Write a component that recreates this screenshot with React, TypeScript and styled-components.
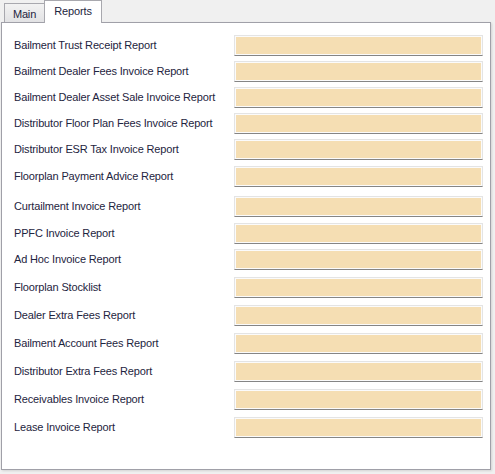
import React from 'react';
import styled, { createGlobalStyle } from 'styled-components';

const GlobalStyle = createGlobalStyle`
  html, body {
    margin: 0;
    padding: 0;
    background: #f0f0f0;
  }
  body {
    font-family: "Liberation Sans", Arial, sans-serif;
    font-size: 11px;
    letter-spacing: -0.15px;
    color: #1e2440;
  }
`;

const Window = styled.div`
  width: 495px;
  height: 474px;
  padding-left: 1px;
  box-sizing: border-box;
`;

const TabStrip = styled.div`
  display: flex;
  align-items: flex-end;
  height: 22px;
  padding-left: 3px;
`;

const Tab = styled.div<{ $active?: boolean }>`
  box-sizing: border-box;
  display: flex;
  align-items: center;
  justify-content: center;
  border: 1px solid #a8a8ae;
  border-bottom: none;
  font-size: 11px;
  color: #1e2440;
  ${(p) =>
    p.$active
      ? `
    height: 23px;
    width: 58px;
    margin-left: -1px;
    margin-bottom: -1px;
    background: #ffffff;
    position: relative;
    z-index: 1;
    padding-bottom: 2px;
  `
      : `
    height: 19px;
    width: 41px;
    background: linear-gradient(#f2f2f2, #e2e2e4);
    padding-top: 1px;
  `}
`;

const Panel = styled.div`
  box-sizing: border-box;
  width: 490px;
  height: 448px;
  background: #ffffff;
  border: 1px solid #a0a0a8;
  box-shadow: 1px 1px 2px rgba(0, 0, 0, 0.12);
  padding: 12px 7px 0 12px;
  display: grid;
  grid-template-columns: 1fr 249px;
  align-content: start;
`;

const Label = styled.div<{ $gap: number }>`
  margin-top: ${(p) => p.$gap}px;
  height: 21px;
  padding-bottom: 1px;
  box-sizing: border-box;
  display: flex;
  align-items: center;
  white-space: nowrap;
`;

const Field = styled.div<{ $gap: number }>`
  margin-top: ${(p) => p.$gap}px;
  box-sizing: border-box;
  height: 21px;
  border: 1px solid #e4e4e4;
  border-bottom: 1px solid #858585;
  box-shadow: inset 0 0 0 1px #fbfbfb;
  background: #f5deb3;
`;

const reports: [string, number][] = [
  ['Bailment Trust Receipt Report', 0],
  ['Bailment Dealer Fees Invoice Report', 5],
  ['Bailment Dealer Asset Sale Invoice Report', 5],
  ['Distributor Floor Plan Fees Invoice Report', 5],
  ['Distributor ESR Tax Invoice Report', 5],
  ['Floorplan Payment Advice Report', 6],
  ['Curtailment Invoice Report', 9],
  ['PPFC Invoice Report', 6],
  ['Ad Hoc Invoice Report', 5],
  ['Floorplan Stocklist', 7],
  ['Dealer Extra Fees Report', 7],
  ['Bailment Account Fees Report', 7],
  ['Distributor Extra Fees Report', 7],
  ['Receivables Invoice Report', 7],
  ['Lease Invoice Report', 7],
];

export default function App() {
  return (
    <>
      <GlobalStyle />
      <Window>
        <TabStrip>
          <Tab>Main</Tab>
          <Tab $active>Reports</Tab>
        </TabStrip>
        <Panel>
          {reports.map(([name, gap]) => (
            <React.Fragment key={name}>
              <Label $gap={gap}>{name}</Label>
              <Field $gap={gap} />
            </React.Fragment>
          ))}
        </Panel>
      </Window>
    </>
  );
}
